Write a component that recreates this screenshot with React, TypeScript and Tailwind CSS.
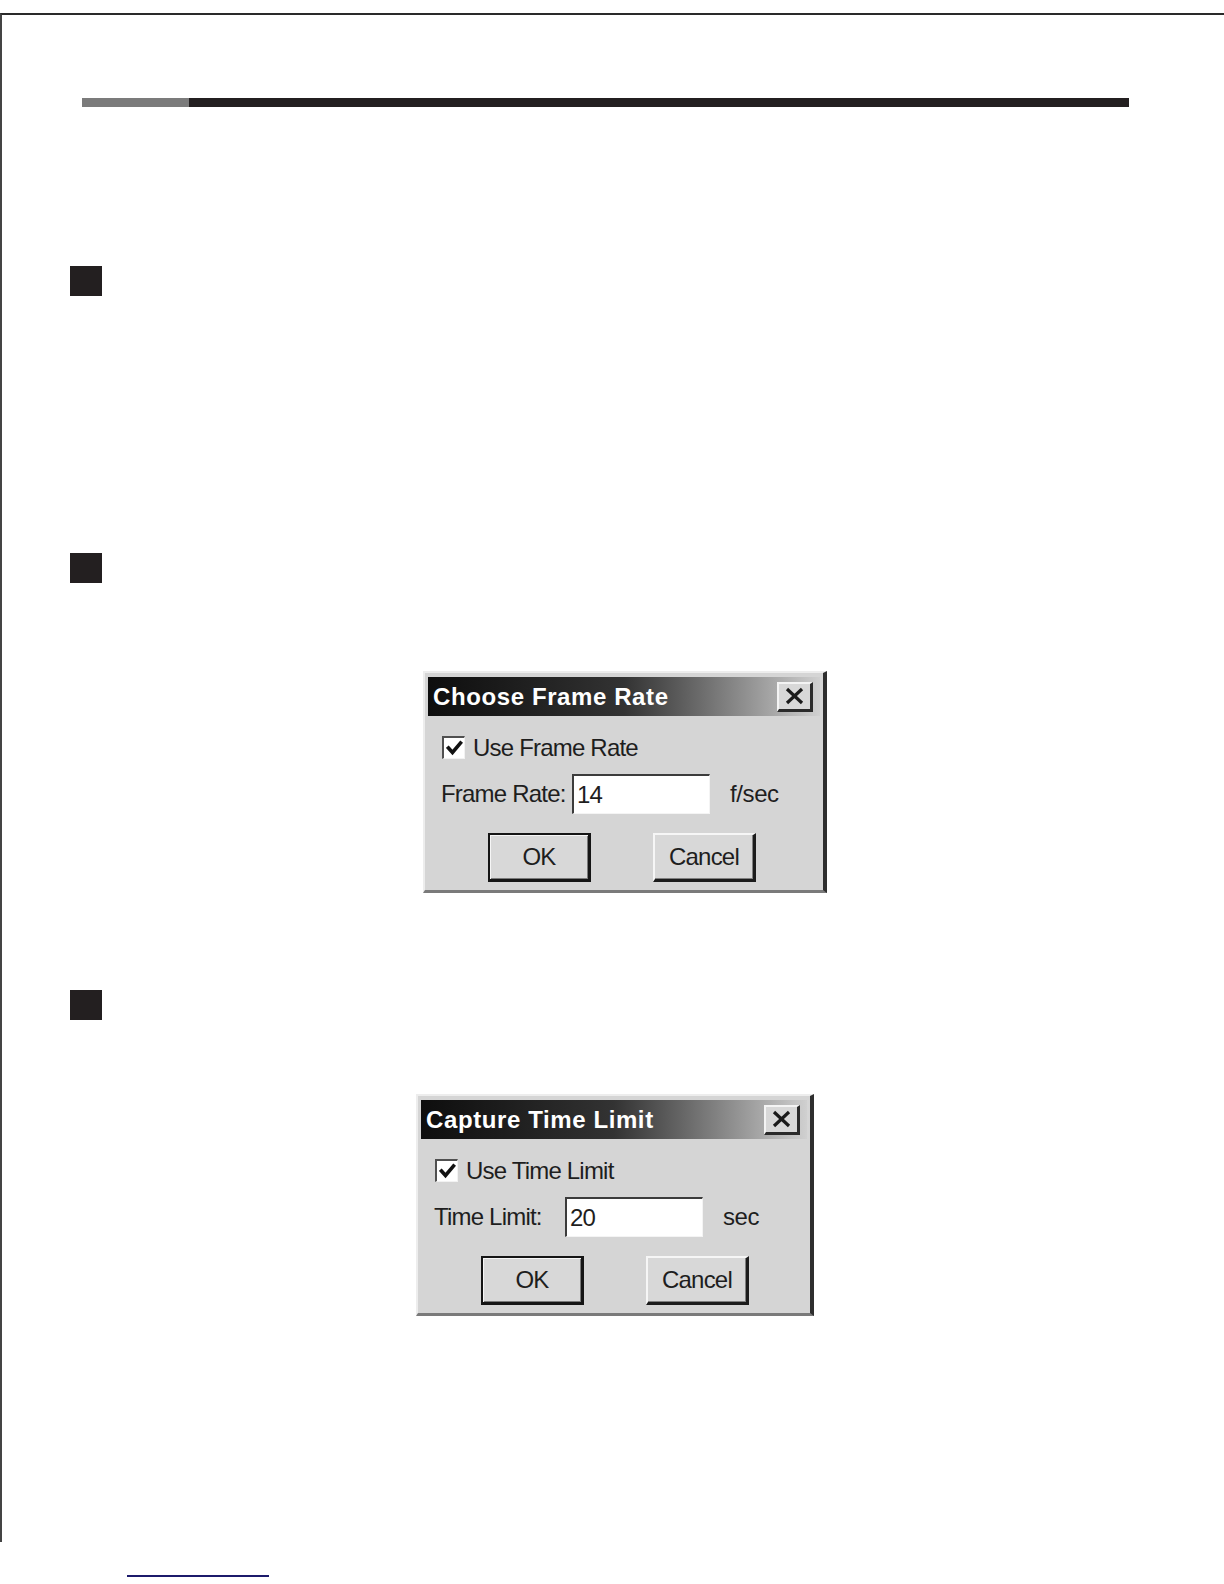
import React from "react";

const sans = { fontFamily: '"Liberation Sans", Arial, sans-serif' };

function CheckBox() {
  return (
    <div className="w-[23px] h-[23px] bg-white border-t-2 border-l-2 border-b border-r border-t-[#505050] border-l-[#505050] border-b-[#f2f2f2] border-r-[#f2f2f2] flex items-center justify-center">
      <svg width="17" height="17" viewBox="0 0 17 17">
        <polyline points="2.5,8 6.5,12.5 14.5,3" fill="none" stroke="#111" strokeWidth="3.6" strokeLinecap="square" />
      </svg>
    </div>
  );
}

function CloseButton() {
  return (
    <div className="w-[36px] h-[30px] bg-[#d8d8d8] border-t-2 border-l-2 border-r-[3px] border-b-[3px] border-t-[#f4f4f4] border-l-[#f4f4f4] border-r-[#2a2a2a] border-b-[#2a2a2a] flex items-center justify-center">
      <svg width="21" height="18" viewBox="0 0 21 18">
        <line x1="3" y1="2" x2="18" y2="16" stroke="#1a1a1a" strokeWidth="3.2" />
        <line x1="18" y1="2" x2="3" y2="16" stroke="#1a1a1a" strokeWidth="3.2" />
      </svg>
    </div>
  );
}

function Dialog({
  title,
  check,
  label,
  value,
  suffix,
  outer,
}: {
  title: string;
  check: string;
  label: string;
  value: string;
  suffix: string;
  outer: string;
}) {
  return (
    <div
      className={`${outer} bg-[#d5d5d5] border-t-2 border-l-2 border-r-[4px] border-b-[3px] border-t-[#ededed] border-l-[#ededed] border-r-[#2e2e2e] border-b-[#7a7a7a] px-[3px] pt-[4px] pb-[8px] text-[#1e1e1e]`}
      style={sans}
    >
      <div className="h-[39px] bg-linear-to-r from-[#0e0e0e] via-[#333333] to-[#d0d0d0] flex items-center justify-between pl-[5px] pr-[7px]">
        <span className="text-white font-bold text-[24px] tracking-[0.6px] leading-none">{title}</span>
        <CloseButton />
      </div>
      <div className="mt-[20px] ml-[14px] flex items-center h-[23px]">
        <CheckBox />
        <span className="ml-[8px] text-[24px] tracking-[-0.8px] leading-none">{check}</span>
      </div>
      <div className="mt-[15px] ml-[13px] flex items-center h-[40px]">
        <span className="w-[131px] text-[24px] tracking-[-0.8px] leading-none">{label}</span>
        <div className="w-[138px] h-[40px] bg-white border-t-2 border-l-2 border-b border-r border-t-[#3c3c3c] border-l-[#3c3c3c] border-b-[#f4f4f4] border-r-[#f4f4f4] flex items-center pl-[3px] text-[24px] tracking-[-0.8px]">
          {value}
        </div>
        <span className="ml-[20px] text-[24px] tracking-[-0.4px] leading-none">{suffix}</span>
      </div>
      <div className="mt-[19px] ml-[60px] flex h-[49px] gap-[62px]">
        <div className="w-[103px] h-[49px] bg-[#d8d8d8] border-t-2 border-l-2 border-r-[3px] border-b-[3px] border-[#151515] shadow-[inset_1px_1px_0_#f6f6f6,inset_-1px_-1px_0_#7a7a7a] flex items-center justify-center text-[24px] tracking-[-0.8px]">
          OK
        </div>
        <div className="w-[103px] h-[49px] bg-[#d8d8d8] border-t-2 border-l-2 border-r-[3px] border-b-[3px] border-t-[#f6f6f6] border-l-[#f6f6f6] border-r-[#1c1c1c] border-b-[#1c1c1c] shadow-[inset_-1px_-1px_0_#808080] flex items-center justify-center text-[24px] tracking-[-0.8px]">
          Cancel
        </div>
      </div>
    </div>
  );
}

function Bullet({ mt }: { mt: string }) {
  return <div className={`${mt} ml-[68px] w-[32px] h-[30px] bg-[#231f20]`} />;
}

export default function App() {
  return (
    <div className="relative w-[1224px] h-[1584px] bg-white overflow-hidden">
      <div className="mt-[13px] h-[1529px] border-t-2 border-l-2 border-t-[#2a2a2a] border-l-[#444]">
        <div className="mt-[83px] ml-[80px] flex h-[9px]">
          <div className="w-[107px] bg-[#7b7b7b]" />
          <div className="w-[940px] bg-[#231f20]" />
        </div>
        <Bullet mt="mt-[159px]" />
        <Bullet mt="mt-[257px]" />
        <Dialog
          outer="mt-[88px] ml-[421px] w-[404px]"
          title="Choose Frame Rate"
          check="Use Frame Rate"
          label="Frame Rate:"
          value="14"
          suffix="f/sec"
        />
        <Bullet mt="mt-[97px]" />
        <Dialog
          outer="mt-[74px] ml-[414px] w-[398px]"
          title="Capture Time Limit"
          check="Use Time Limit"
          label="Time Limit:"
          value="20"
          suffix="sec"
        />
      </div>
      <div className="mt-[33px] ml-[127px] w-[142px] h-[2px] bg-[#1c1a6b]" />
    </div>
  );
}
